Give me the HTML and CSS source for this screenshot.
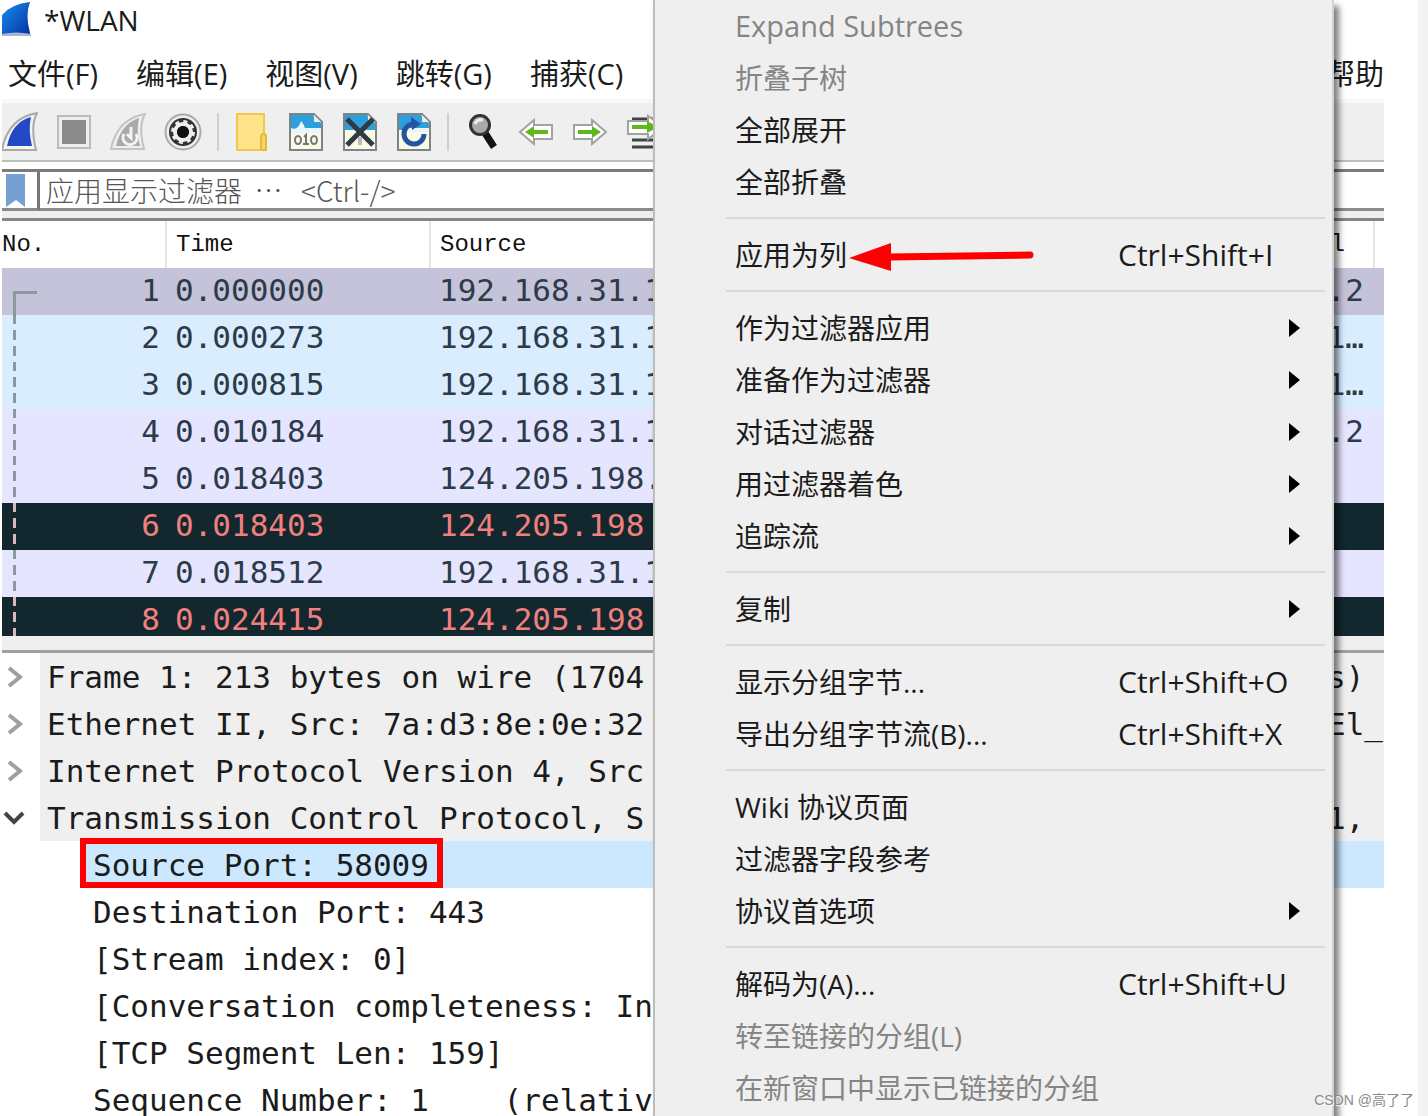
FILE: index.html
```html
<!DOCTYPE html>
<html lang="zh-CN">
<head>
<meta charset="utf-8">
<title>*WLAN</title>
<link rel="stylesheet" href="styles.css">
</head>
<body>
<main class="app">
  <header class="title">
    <svg width="30" height="34" viewBox="0 0 30 34" aria-hidden="true">
      <defs><linearGradient id="fin" x1="0" y1="0" x2="1" y2="1"><stop offset="0" stop-color="#1690f5"/><stop offset="1" stop-color="#062f9c"/></linearGradient></defs>
      <path d="M0 13Q9 2 28 0Q23 13 28 31V34H0Z" fill="url(#fin)"/><path d="M0 32Q14 29 29 32V34H0Z" fill="#a9b5d8"/>
    </svg>
    <span>*WLAN</span>
  </header>

  <nav class="menubar">
    <button>文件(F)</button><button>编辑(E)</button><button>视图(V)</button><button>跳转(G)</button><button>捕获(C)</button><button class="help">帮助</button>
  </nav>

  <div class="toolbar">
    <button class="tool" aria-label="开始捕获"><svg width="36" height="40" viewBox="0 0 36 40"><path d="M0 38Q6 6 35 1Q28 14 34 38Z" fill="#f4f4f4" stroke="#aaa" stroke-width="2"/><path d="M5 34Q10 10 29 5Q26 18 30 34Z" fill="#2548c4"/></svg></button>
    <button class="tool" aria-label="停止捕获"><svg width="36" height="40" viewBox="0 0 36 40"><rect x="2" y="4" width="32" height="32" fill="#eee" stroke="#bbb" stroke-width="2"/><rect x="6" y="8" width="24" height="24" fill="#8b8b8b"/></svg></button>
    <button class="tool" aria-label="重新捕获"><svg width="36" height="40" viewBox="0 0 36 40"><path d="M1 37Q7 7 35 2Q28 14 34 37Z" fill="#eee" stroke="#c4c4c4" stroke-width="2"/><path d="M6 34Q11 12 29 6Q26 20 30 34Z" fill="#aaa"/><path d="M14 22A7 7 0 1 0 26 22M21 15V26L17 22" fill="none" stroke="#f4f4f4" stroke-width="3"/></svg></button>
    <button class="tool" aria-label="捕获选项"><svg width="38" height="40" viewBox="0 0 38 40"><circle cx="19" cy="20" r="17.500" fill="#eee" stroke="#aaa" stroke-width="2"/><circle cx="19" cy="20" r="14" fill="#333"/><circle cx="19" cy="20" r="8" fill="none" stroke="#eee" stroke-width="4"/><circle cx="19" cy="20" r="10.500" fill="none" stroke="#eee" stroke-width="3" stroke-dasharray="4 4.247"/><circle cx="19" cy="20" r="6" fill="#111"/></svg></button>
    <span class="divider"></span>
    <button class="tool" aria-label="打开"><svg width="36" height="40" viewBox="0 0 36 40"><path d="M3 2H30V22L32 24V38H3Z" fill="#ffe28a" stroke="#efc84e" stroke-width="2"/><path d="M27 38V25Q27 22 30 22Q32 22 32 25V38Z" fill="#f8d568" stroke="#e6ba38" stroke-width="2"/></svg></button>
    <button class="tool" aria-label="保存"><svg width="36" height="40" viewBox="0 0 36 40"><path d="M2 2H26L34 10V38H2Z" fill="#fbfae6"/><path d="M3 3H25L33 11V20H3Z" fill="#2e9fdc"/><path d="M3 16Q10 19 13 9Q16 12 17 16H33V21H3Z" fill="#e8f6fc"/><path d="M2 2H26L34 10V38H2Z" fill="none" stroke="#7d8583" stroke-width="2"/><path d="M26 3V10H33Z" fill="#eef0e4"/><g fill="none" stroke="#777" stroke-width="2"><ellipse cx="10" cy="28" rx="3" ry="4"/><path d="M16 25L18 23V32M15 32H21"/><ellipse cx="26" cy="28" rx="3" ry="4"/></g></svg></button>
    <button class="tool" aria-label="关闭"><svg width="36" height="40" viewBox="0 0 36 40"><path d="M2 2H26L34 10V38H2Z" fill="#fbfae6"/><path d="M3 3H25L33 11V18H3Z" fill="#2e9fdc"/><path d="M2 2H26L34 10V38H2Z" fill="none" stroke="#7d8583" stroke-width="2"/><path d="M26 3V10H33Z" fill="#eef0e4"/><path d="M18 25V33" stroke="#bbb" stroke-width="4"/><path d="M5 7L31 33M31 7L5 33" stroke="#2f3a42" stroke-width="5"/></svg></button>
    <button class="tool" aria-label="重新加载"><svg width="36" height="40" viewBox="0 0 36 40"><path d="M2 2H26L34 10V38H2Z" fill="#fbfae6"/><path d="M3 3H25L33 11V18H3Z" fill="#2e9fdc"/><path d="M9 16H33V20H7Z" fill="#e8f6fc"/><path d="M2 2H26L34 10V38H2Z" fill="none" stroke="#7d8583" stroke-width="2"/><path d="M26 3V10H33Z" fill="#eef0e4"/><path d="M17 12A10 10 0 1 0 28 22" fill="none" stroke="#24549e" stroke-width="5"/><path d="M15 5L25 12L16 18Z" fill="#24549e"/></svg></button>
    <span class="divider"></span>
    <button class="tool" aria-label="查找"><svg width="36" height="40" viewBox="0 0 36 40"><path d="M21 21L30 35" stroke="#111" stroke-width="7"/><circle cx="16" cy="13" r="9.500" fill="#aaa" stroke="#333" stroke-width="3"/><path d="M11 12Q13 7 19 8" fill="none" stroke="#eee" stroke-width="3"/></svg></button>
    <button class="tool" aria-label="上一分组"><svg width="36" height="40" viewBox="0 0 36 40"><path d="M2 20L16 8V13H34V27H16V32Z" fill="#fff" stroke="#a2a2a2" stroke-width="2"/><path d="M7 20L16 14V18H30V22H16V26Z" fill="#5fb91a"/></svg></button>
    <button class="tool" aria-label="下一分组"><svg width="36" height="40" viewBox="0 0 36 40"><path d="M34 20L20 8V13H2V27H20V32Z" fill="#fff" stroke="#a2a2a2" stroke-width="2"/><path d="M29 20L20 14V18H6V22H20V26Z" fill="#5fb91a"/></svg></button>
    <button class="tool" aria-label="转到分组"><svg width="36" height="40" viewBox="0 0 36 40"><path d="M6 7H32M6 28H34M6 35H34" stroke="#3d4548" stroke-width="3"/><path d="M38 15L22 4V9H2V22H22V27Z" fill="#fff" stroke="#a2a2a2" stroke-width="2"/><path d="M32 15L21 9V13H6V17H21V21Z" fill="#5fb91a"/></svg></button>
  </div>

  <div class="filter">
    <button class="bookmark" aria-label="书签"><svg width="20" height="34" viewBox="0 0 20 34"><path d="M0 0H19V33L10 26L0 33Z" fill="#74a0d3"/></svg></button>
    <input type="text" aria-label="显示过滤器" placeholder="应用显示过滤器  ⋯   &lt;Ctrl-/&gt;">
  </div>

  <section class="packets">
    <table>
      <colgroup><col class="c-no"><col class="c-time"><col><col class="c-dest"><col class="c-end"></colgroup>
      <thead><tr><th>No.</th><th>Time</th><th>Source</th><th class="right">l</th><th></th></tr></thead>
      <tbody>
        <tr class="current first"><td>1</td><td>0.000000</td><td>192.168.31.1</td><td>.2</td><td></td></tr>
        <tr class="udp"><td>2</td><td>0.000273</td><td>192.168.31.1</td><td>1…</td><td></td></tr>
        <tr class="udp"><td>3</td><td>0.000815</td><td>192.168.31.1</td><td>1…</td><td></td></tr>
        <tr class="tcp"><td>4</td><td>0.010184</td><td>192.168.31.1</td><td>.2</td><td></td></tr>
        <tr class="tcp"><td>5</td><td>0.018403</td><td>124.205.198.</td><td></td><td></td></tr>
        <tr class="bad"><td>6</td><td>0.018403</td><td>124.205.198</td><td></td><td></td></tr>
        <tr class="tcp"><td>7</td><td>0.018512</td><td>192.168.31.1</td><td></td><td></td></tr>
        <tr class="bad"><td>8</td><td>0.024415</td><td>124.205.198</td><td></td><td></td></tr>
      </tbody>
    </table>
  </section>

  <section class="details">
    <ul>
      <li class="node"><svg class="chev" viewBox="0 0 24 24"><path d="M7 3L18 12L7 21"/></svg><div><span>Frame 1: 213 bytes on wire (1704</span><span class="tail">s)</span></div></li>
      <li class="node"><svg class="chev" viewBox="0 0 24 24"><path d="M7 3L18 12L7 21"/></svg><div><span>Ethernet II, Src: 7a:d3:8e:0e:32</span><span class="tail">El_</span></div></li>
      <li class="node"><svg class="chev" viewBox="0 0 24 24"><path d="M7 3L18 12L7 21"/></svg><div><span>Internet Protocol Version 4, Src</span></div></li>
      <li class="node"><svg class="chev open" viewBox="0 0 24 24"><path d="M3 7L12 16L21 7"/></svg><div><span>Transmission Control Protocol, S</span><span class="tail">1,</span></div></li>
      <li class="leaf selected"><span>Source Port: 58009</span></li>
      <li class="leaf">Destination Port: 443</li>
      <li class="leaf">[Stream index: 0]</li>
      <li class="leaf">[Conversation completeness: In</li>
      <li class="leaf">[TCP Segment Len: 159]</li>
      <li class="leaf">Sequence Number: 1    (relativ</li>
    </ul>
  </section>
</main>

<div class="popup">
  <button class="latin" disabled>Expand Subtrees</button>
  <button disabled>折叠子树</button>
  <button>全部展开</button>
  <button>全部折叠</button>
  <hr>
  <button><span>应用为列</span><kbd>Ctrl+Shift+I</kbd>
    <svg class="pointer" width="186" height="32" viewBox="0 0 186 32" aria-hidden="true"><path d="M0 17L42 2V30Z" fill="#f00"/><path d="M40 16L181 14" stroke="#f00" stroke-width="7" stroke-linecap="round"/></svg>
  </button>
  <hr>
  <button class="sub">作为过滤器应用</button>
  <button class="sub">准备作为过滤器</button>
  <button class="sub">对话过滤器</button>
  <button class="sub">用过滤器着色</button>
  <button class="sub">追踪流</button>
  <hr>
  <button class="sub">复制</button>
  <hr>
  <button><span>显示分组字节...</span><kbd>Ctrl+Shift+O</kbd></button>
  <button><span>导出分组字节流(B)...</span><kbd>Ctrl+Shift+X</kbd></button>
  <hr>
  <button>Wiki 协议页面</button>
  <button>过滤器字段参考</button>
  <button class="sub">协议首选项</button>
  <hr>
  <button><span>解码为(A)...</span><kbd>Ctrl+Shift+U</kbd></button>
  <button disabled>转至链接的分组(L)</button>
  <button disabled>在新窗口中显示已链接的分组</button>
</div>
<div class="watermark">CSDN @高了了</div>
</body>
</html>
```
FILE: styles.css
```css
* { box-sizing: border-box; }

body {
  position: relative;
  height: 100vh;
  margin: 0;
  padding: 0 34px 0 2px;
  border-right: 10px solid #f3f3f3;
  overflow: hidden;
  background: #fff;
  color: #1b1b1b;
  font: 28px/36px "Open Sans", "Noto Sans CJK SC", sans-serif;
}

button {
  margin: 0;
  padding: 0;
  border: 0;
  background: none;
  color: inherit;
  font: inherit;
  text-align: left;
  white-space: nowrap;
}

.app {
  display: flex;
  flex-direction: column;
  height: 100%;
  overflow: hidden;
}

.title {
  display: flex;
  align-items: flex-start;
  gap: 12px;
  height: 49px;
  padding-top: 2px;
}

.menubar {
  display: flex;
  align-items: center;
  gap: 38px;
  height: 50px;
  padding-left: 6px;
  font-size: 29px;
}

.help { margin-left: auto; }

.toolbar {
  display: flex;
  align-items: center;
  gap: 18px;
  height: 63px;
  border-top: 4px solid #f8f8f8;
  border-bottom: 2px solid #bdbdbd;
  background: #efefef;
}

.tool, .tool svg, .bookmark svg { display: block; }

.divider {
  width: 2px;
  height: 38px;
  margin: 0 -3px;
  background: #cfcfcf;
}

.filter {
  display: flex;
  height: 49px;
  margin-top: 7px;
  border-top: 3px solid #7b7b7b;
  border-bottom: 7px solid #efefef;
}

.bookmark {
  width: 38px;
  padding: 2px 0 0 4px;
  border-right: 3px solid #777;
  border-bottom: 3px solid #8b8b8b;
}

.filter input {
  flex: 1;
  min-width: 0;
  padding: 0 6px;
  border: 0;
  border-bottom: 3px solid #8b8b8b;
  outline: 0;
  font: 300 28px/36px "Noto Sans CJK SC", monospace;
}

.filter input::placeholder { color: #555; opacity: 1; }

.packets {
  flex: 0 0 418px;
  border-top: 3px solid #82868c;
  overflow: hidden;
  font: 31px/47px "DejaVu Sans Mono", monospace;
}

table {
  width: 100%;
  border-collapse: collapse;
  table-layout: fixed;
}

.c-no { width: 164px; }
.c-time { width: 264px; }
.c-dest { width: 120px; }
.c-end { width: 10px; }

th {
  height: 47px;
  padding: 0 0 0 9px;
  border-right: 2px solid #e4e4e4;
  color: #111;
  font: 24px/47px "Liberation Mono", monospace;
  text-align: left;
}

th:first-child { padding: 0; }
th:nth-child(3), th:last-child { border-right: 0; }
th.right { padding-right: 28px; text-align: right; }

td {
  height: 47px;
  padding: 0 0 0 9px;
  line-height: 44px;
  vertical-align: top;
  overflow: hidden;
  white-space: nowrap;
}

td:first-child {
  position: relative;
  padding-right: 6px;
  text-align: right;
}

td:nth-child(4) { padding-right: 10px; text-align: right; }

.current { background: #c5c3d9; color: #2c3b48; }
.udp { background: #daedff; color: #2c3b48; }
.tcp { background: #e6e5ff; color: #2c3b48; }
.bad { background: #12272e; color: #f0807d; }

/* Conversation trace down the left edge of the list */
td:first-child::before {
  content: "";
  position: absolute;
  top: 0;
  left: 11px;
  width: 3px;
  height: 47px;
  background: linear-gradient(#8d979f 9px, transparent 9px 15px, #8d979f 15px 25px, transparent 25px 31px, #8d979f 31px 41px, transparent 41px);
}

.first td:first-child::before {
  top: 23px;
  width: 21px;
  height: 24px;
  border: solid #8d979f;
  border-width: 3px 0 0 3px;
  background: none;
}

.bad td:first-child::before {
  background: linear-gradient(#d9b9bc 9px, transparent 9px 15px, #d9b9bc 15px 25px, transparent 25px 31px, #d9b9bc 31px 41px, transparent 41px);
}

.details {
  flex: 1;
  border-top: 14px solid #efefef;
  overflow: hidden;
  font: 31px/48px "DejaVu Sans Mono", monospace;
}

.details ul {
  margin: 0;
  padding: 0;
  border-top: 3px solid #9da0a7;
  list-style: none;
}

.node {
  display: flex;
  align-items: center;
  height: 47px;
}

.node div {
  display: flex;
  flex: 1;
  justify-content: space-between;
  min-width: 0;
  height: 47px;
  padding-left: 7px;
  background: #efefef;
  white-space: nowrap;
}

.tail { width: 57px; }

.chev {
  width: 24px;
  height: 24px;
  margin-right: 14px;
  fill: none;
  stroke: #a0a0a0;
  stroke-width: 4;
}

.chev.open { stroke: #444; }

.leaf {
  height: 47px;
  margin-left: 78px;
  padding-left: 13px;
  white-space: pre;
}

.leaf.selected {
  padding-left: 0;
  background: #cce8ff;
}

.selected span {
  display: block;
  position: relative;
  top: -3px;
  width: fit-content;
  height: 50px;
  padding: 0 8px 0 7px;
  border: 6px solid #f00;
  line-height: 42px;
}

.popup {
  position: absolute;
  top: 0;
  bottom: -8px;
  left: 653px;
  width: 681px;
  padding-top: 1px;
  border-left: 2px solid #bdbdbd;
  border-right: 2px solid #d2d2d2;
  background: #efefef;
  box-shadow: 5px 6px 6px rgba(0, 0, 0, .5);
}

.popup button {
  position: relative;
  display: flex;
  align-items: center;
  width: 100%;
  height: 52px;
  padding: 0 32px 2px 80px;
}

.popup button:disabled { color: #858585; }
.popup .latin { font-size: 29px; }

.popup kbd {
  width: 182px;
  margin-left: auto;
  font: inherit;
  font-size: 30px;
}

.popup hr {
  height: 21px;
  margin: 0 7px 0 71px;
  border: 0;
  background: linear-gradient(transparent 8px, #dadada 8px 10px, transparent 10px);
}

.sub::after {
  content: "";
  margin-left: auto;
  border: solid transparent;
  border-width: 9px 0 9px 11px;
  border-left-color: #000;
}

.pointer {
  position: absolute;
  top: 11px;
  left: 194px;
}

.watermark {
  position: absolute;
  right: 4px;
  bottom: 4px;
  color: #8a8a8a;
  font: 14px/24px "Liberation Sans", "Noto Sans CJK SC", sans-serif;
  text-shadow: 1px 1px 1px #fff;
}
```
